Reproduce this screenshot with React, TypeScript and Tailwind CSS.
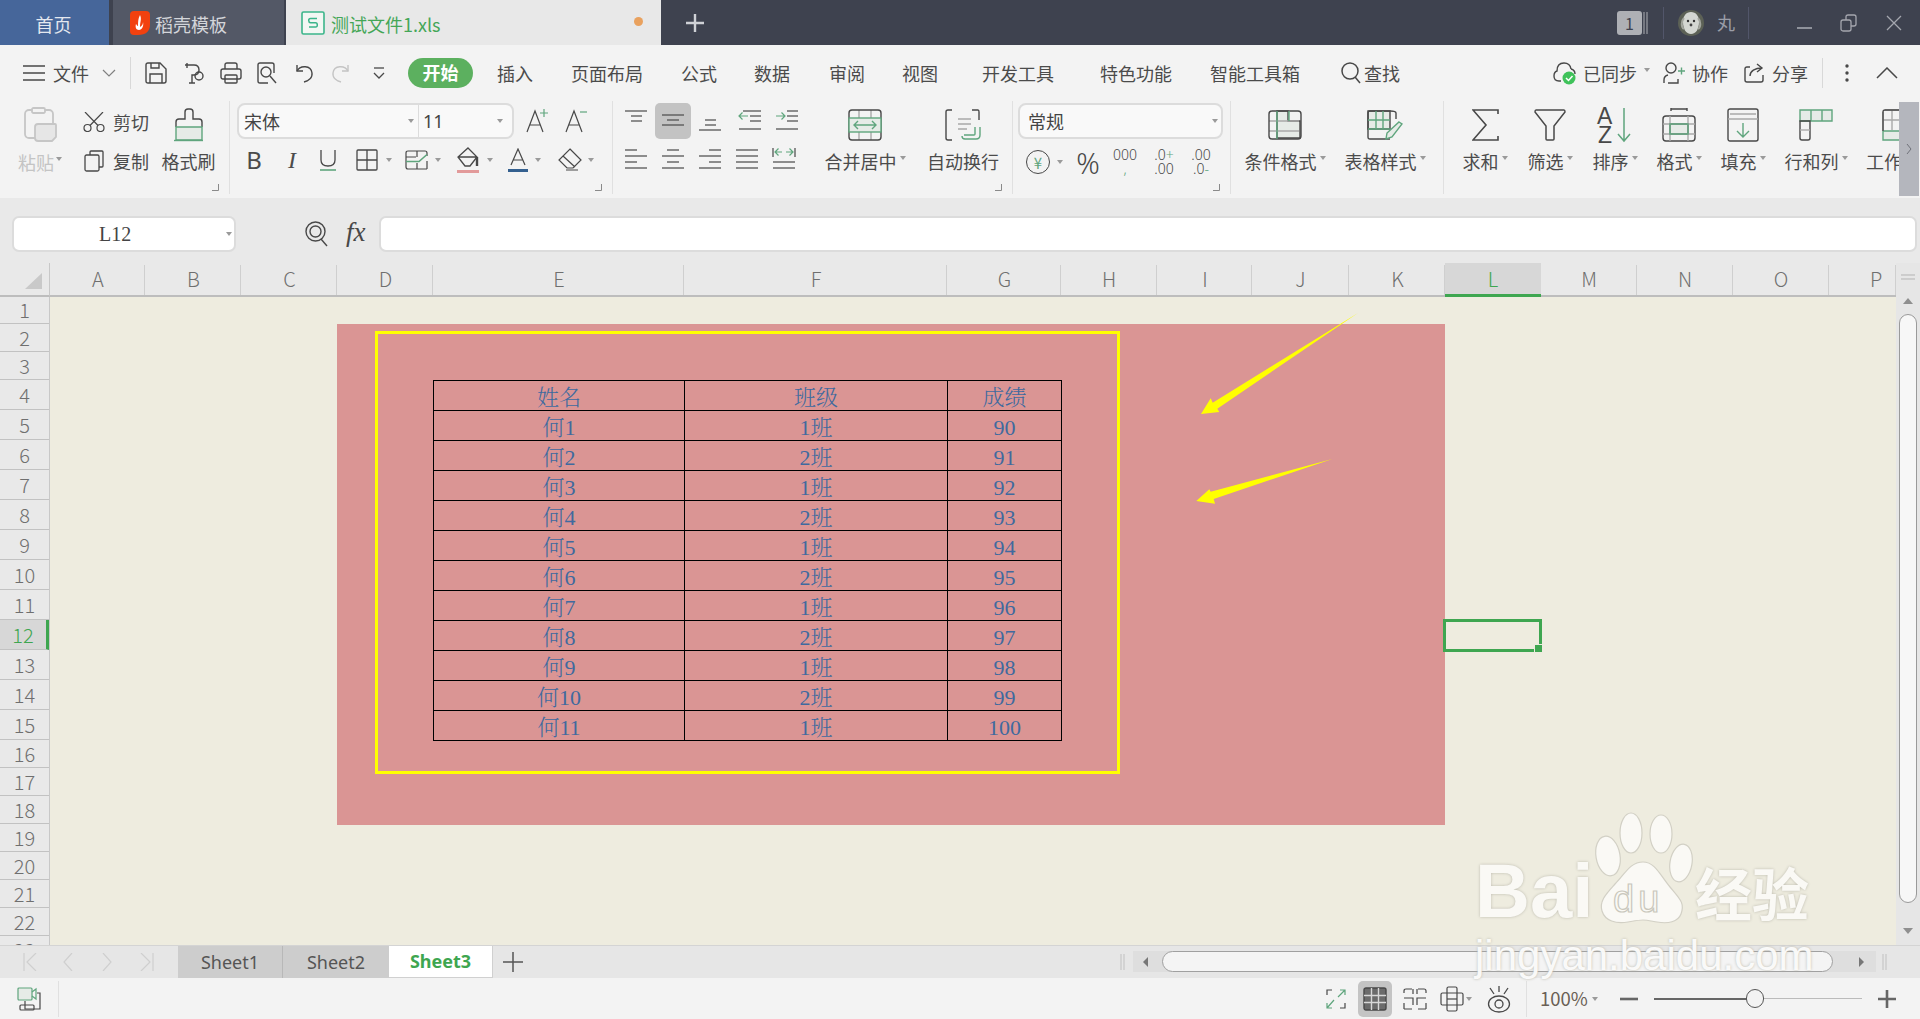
import React from 'react';

const D = '#484848';
const G = '#5fa57d';
const L = '#e6ebe7';
const M = '#a9a9a9';

function Sv({ w, h, children, sw = 1.4, stroke = D }: { w: number; h: number; children?: React.ReactNode; sw?: number; stroke?: string }) {
  return (
    <svg width={w} height={h} viewBox={`0 0 ${w} ${h}`} fill="none" stroke={stroke} strokeWidth={sw} className="block shrink-0">
      {children}
    </svg>
  );
}

function Caret({ c = '' }: { c?: string }) {
  return <span className={`block w-0 h-0 shrink-0 border-l-[3.5px] border-r-[3.5px] border-t-[4px] border-l-transparent border-r-transparent border-t-[#9a9a9a] ${c}`} />;
}

function Corner() {
  return (
    <span className="absolute right-[10px] top-[94px] block">
      <Sv w={7} h={7} sw={1} stroke="#8a8a8a"><path d="M6.5 0v6.5H0" /></Sv>
    </span>
  );
}

function Tall({ c, icon, label, caret = true }: { c: string; icon: React.ReactNode; label: string; caret?: boolean }) {
  return (
    <div className={`flex flex-col items-center pt-[18px] shrink-0 ${c}`}>
      <div className="h-[34px] flex items-center justify-center">{icon}</div>
      <div className="mt-[7px] h-[24px] flex items-center text-[18px] leading-none text-[#4b4b4b] whitespace-nowrap">
        <span>{label}</span>
        {caret && <Caret c="ml-[3px] mb-[6px]" />}
      </div>
    </div>
  );
}

function Lines({ rows, extra, h = 36 }: { rows: [number, number, number][]; extra?: React.ReactNode; h?: number }) {
  return (
    <Sv w={36} h={h} sw={1.2}>
      {rows.map((r, i) => <line key={i} x1={r[0]} x2={r[1]} y1={r[2]} y2={r[2]} />)}
      {extra}
    </Sv>
  );
}

const arrowL = (x: number, y: number, w: number) => <path stroke={G} d={`M${x + w} ${y}H${x}m3.5-3.5L${x} ${y}l3.5 3.5`} />;
const arrowR = (x: number, y: number, w: number) => <path stroke={G} d={`M${x} ${y}h${w}m-3.5-3.5 3.5 3.5-3.5 3.5`} />;

const columns = [
  { n: 'A', c: 'w-[95px]', t: 'pl-[2px]' }, { n: 'B', c: 'w-[96px]', t: 'pl-[2px]' }, { n: 'C', c: 'w-[96px]', t: 'pl-[2px]' }, { n: 'D', c: 'w-[96px]', t: 'pl-[2px]' },
  { n: 'E', c: 'w-[251px]', t: 'pl-[2px]' }, { n: 'F', c: 'w-[263px]', t: 'pl-[2px]' }, { n: 'G', c: 'w-[114px]', t: 'pl-[2px]' }, { n: 'H', c: 'w-[96px]', t: 'pl-[1px]' },
  { n: 'I', c: 'w-[95px]', t: 'pl-[2px]' }, { n: 'J', c: 'w-[97px]', t: 'pl-[1px]' }, { n: 'K', c: 'w-[96px]', t: 'pl-[2px]' }, { n: 'L', c: 'w-[96px]', t: '' },
  { n: 'M', c: 'w-[96px]', t: 'pl-[1px]' }, { n: 'N', c: 'w-[96px]', t: 'pl-[1px]' }, { n: 'O', c: 'w-[96px]', t: 'pl-[1px]' }, { n: 'P', c: 'w-[67px]', t: 'pl-[28px]' },
];

const rowHeads = Array.from({ length: 23 }, (_, i) => {
  const n = i + 1;
  const c = n === 1 ? 'h-[27px]' : n < 4 ? 'h-[28px]' : n < 16 ? 'h-[30px]' : 'h-[28px]';
  return { n, c };
});

const tableRows = Array.from({ length: 11 }, (_, i) => [`何${i + 1}`, `${i % 2 === 0 ? 1 : 2}班`, `${90 + i}`]);

const cellCls = "border border-black p-0 pt-[5px] h-[30px] text-center text-[22px] leading-none text-[#3f6a9f] font-['Liberation_Serif','Noto_Serif_CJK_SC','Noto_Sans_CJK_SC',serif] font-light";

function TitleBar() {
  return (
    <div className="flex h-[45px] bg-[#3e424f] shrink-0 items-stretch">
      <div className="w-[109px] pt-[3px] pr-[2px] bg-[#46669a] flex items-center justify-center text-[18px] text-[#e4e8ef] shrink-0">首页</div>
      <div className="ml-[4px] w-[171px] bg-[#535866] flex items-center pl-[17px] text-[18px] text-[#d3d5da] shrink-0">
        <svg width="20" height="24" viewBox="0 0 20 24" className="block shrink-0">
          <path d="M4 0h12q4 0 4 4v9q0 11-12 11H4q-4 0-4-4V4q0-4 4-4z" fill="#f2410f" />
          <path d="M10 4c2 4 0 7 0 12 2-1 3-3 3-5 1 4-1 8-4 8-3 0-4-3-3-6 1 1 1 2 2 2 0-4 0-7 2-11z" fill="#fff" />
        </svg>
        <span className="ml-[5px] pt-[3px]">稻壳模板</span>
      </div>
      <div className="ml-[2px] w-[375px] bg-[#e8e8e8] flex items-center pl-[15px] text-[18px] text-[#44a657] shrink-0">
        <svg width="24" height="24" viewBox="0 0 24 24" fill="none" className="block shrink-0">
          <rect x="1" y="1" width="22" height="22" rx="1.5" stroke="#3bb58a" strokeWidth="1.6" fill="#f2f7f3" />
          <path d="M16 7.5H9.5q-1.8 0-1.8 2t1.8 2.2h5q1.8 0 1.8 2.2t-1.8 2.1H8" stroke="#3bb58a" strokeWidth="1.5" />
        </svg>
        <span className="ml-[6px] pt-[3px] whitespace-nowrap">测试文件1.xls</span>
        <span className="ml-[193px] mb-[2px] w-[9px] h-[9px] rounded-full bg-[#e9a15e]" />
      </div>
      <div className="ml-[24px] flex items-center shrink-0">
        <Sv w={20} h={20} sw={2.4} stroke="#cfd1d6"><path d="M10 1v18M1 10h18" /></Sv>
      </div>
      <div className="ml-[912px] flex items-center shrink-0">
        <div className="w-[25px] h-[24px] bg-[#aeb0b5] rounded-[3px] text-[#3e424f] text-[16px] flex items-center justify-center">1</div>
        <Sv w={8} h={24} sw={1} stroke="#aeb0b5"><path d="M2 1v22M5 1v22" /></Sv>
        <div className="ml-[13px] w-px h-[32px] bg-[#52566a]" />
        <svg width="26" height="26" viewBox="0 0 26 26" className="block ml-[14px]">
          <circle cx="13" cy="13" r="13" fill="#5c6156" />
          <path d="M13 2c5 0 8 4 8 10 0 7-3 12-8 12s-8-5-8-12C5 6 8 2 13 2z" fill="#d4d7d2" />
          <path d="M6 8C3 11 3 17 6 19M20 8c3 3 3 9 0 11" stroke="#a3a69e" strokeWidth="2" fill="none" />
          <circle cx="10" cy="11" r="1.2" fill="#333" />
          <circle cx="16" cy="11" r="1.2" fill="#333" />
          <circle cx="13" cy="15" r="1.4" fill="#444" />
        </svg>
        <span className="ml-[13px] text-[18px] text-[#9b9ea8]">丸</span>
        <div className="ml-[13px] w-px h-[32px] bg-[#52566a]" />
        <div className="ml-[48px] mt-[10px]"><Sv w={15} h={4} sw={1.6} stroke="#a5a7af"><path d="M0 2h15" /></Sv></div>
        <div className="ml-[28px]">
          <Sv w={17} h={18} sw={1.3} stroke="#a5a7af"><rect x="1" y="6" width="10" height="11" rx="2" /><path d="M6 6V3q0-2 2-2h6q2 0 2 2v7q0 2-2 2h-3" /></Sv>
        </div>
        <div className="ml-[29px]"><Sv w={16} h={16} sw={1.3} stroke="#a5a7af"><path d="M1 1l14 14M15 1 1 15" /></Sv></div>
      </div>
    </div>
  );
}

function QA({ c, children }: { c: string; children: React.ReactNode }) {
  return <div className={`w-[34px] flex justify-center shrink-0 ${c}`}>{children}</div>;
}

function MenuText({ c, children }: { c: string; children: React.ReactNode }) {
  return <span className={`text-[18px] leading-none whitespace-nowrap shrink-0 text-[#4b4b4b] ${c}`}>{children}</span>;
}

function MenuRow() {
  return (
    <div className="flex items-center h-[45px] pt-[10px] pl-[23px] shrink-0">
      <Sv w={22} h={18} sw={1.5}><path d="M0 2h22M0 9h22M0 16h22" /></Sv>
      <MenuText c="ml-[8px] w-[36px]">文件</MenuText>
      <div className="ml-[13px]"><Sv w={14} h={8} sw={1.2} stroke="#808080"><path d="M1 1l6 6 6-6" /></Sv></div>
      <div className="ml-[14px] w-px h-[32px] bg-[#d8d8d8]" />
      <QA c="ml-[8px]">
        <Sv w={22} h={22}><path d="M3 1h12l6 6v12q0 2-2 2H3q-2 0-2-2V3q0-2 2-2z" /><path d="M5 21v-9h12v9M6 1v5h8V1" /></Sv>
      </QA>
      <QA c="ml-[4px]">
        <Sv w={22} h={22}><path d="M2 3h9q5 0 5 5t-5 5H9v8M6 21h6" /><circle cx="16" cy="14" r="4" /><path d="M4 1v5" /></Sv>
      </QA>
      <QA c="ml-[3px]">
        <Sv w={22} h={22}><path d="M5 7V3q0-2 2-2h8q2 0 2 2v4" /><rect x="1" y="7" width="20" height="10" rx="2" /><rect x="5" y="13" width="12" height="8" rx="1" /></Sv>
      </QA>
      <QA c="ml-[2px]">
        <Sv w={22} h={22}><path d="M12 21H4q-2 0-2-2V3q0-2 2-2h12q2 0 2 2v8" /><circle cx="10" cy="10" r="5" /><path d="M14 14l6 7" /></Sv>
      </QA>
      <QA c="ml-[4px]">
        <Sv w={20} h={20}><path d="M2 2v6h6" /><path d="M2 8c3-6 14-6 15 2 .6 5-4 8-8 9" /></Sv>
      </QA>
      <QA c="ml-[1px]">
        <Sv w={20} h={20} stroke="#c4c4c4"><path d="M18 2v6h-6" /><path d="M18 8c-3-6-14-6-15 2-.6 5 4 8 8 9" /></Sv>
      </QA>
      <QA c="ml-[5px]">
        <Sv w={12} h={14} sw={1.3}><path d="M1 2h10" /><path d="M1 7l5 5 5-5" /></Sv>
      </QA>
      <div className="ml-[12px] w-[65px] h-[30px] rounded-full bg-[#5cb05f] text-white text-[18px] font-bold flex items-center justify-center shrink-0">开始</div>
      <MenuText c="ml-[24px] w-[36px]">插入</MenuText>
      <MenuText c="ml-[38px] w-[72px]">页面布局</MenuText>
      <MenuText c="ml-[38px] w-[36px]">公式</MenuText>
      <MenuText c="ml-[37px] w-[36px]">数据</MenuText>
      <MenuText c="ml-[39px] w-[36px]">审阅</MenuText>
      <MenuText c="ml-[37px] w-[36px]">视图</MenuText>
      <MenuText c="ml-[44px] w-[72px]">开发工具</MenuText>
      <MenuText c="ml-[46px] w-[72px]">特色功能</MenuText>
      <MenuText c="ml-[38px] w-[90px]">智能工具箱</MenuText>
      <div className="ml-[40px]"><Sv w={22} h={24} sw={1.5}><circle cx="10" cy="10" r="8" /><path d="M15 16l5 6" /></Sv></div>
      <MenuText c="ml-[2px] w-[36px]">查找</MenuText>
      <div className="ml-[153px]">
        <svg width="24" height="24" viewBox="0 0 24 24" fill="none" className="block">
          <path d="M8 20H6q-5 0-5-5 0-4 3-5 0-8 7-8 6 0 7 6" stroke={D} strokeWidth="1.4" />
          <path d="M18 8q4 1 4 5" stroke={D} strokeWidth="1.4" />
          <circle cx="16" cy="17" r="6.5" fill="#3fc25a" />
          <path d="M13 17l2.5 2.5L19.5 15" stroke="#fff" strokeWidth="1.5" />
        </svg>
      </div>
      <MenuText c="ml-[6px] w-[54px]">已同步</MenuText>
      <Caret c="ml-[7px] mb-[5px]" />
      <div className="ml-[13px]"><Sv w={22} h={22}><circle cx="8" cy="6" r="5" /><path d="M1 21v-3q0-4 4-5M5 21h10v-4" /><path stroke={G} d="M15 9h7M18.5 5.5v7" /></Sv></div>
      <MenuText c="ml-[7px] w-[36px]">协作</MenuText>
      <div className="ml-[16px]"><Sv w={20} h={20}><path d="M6 4H3Q1 4 1 6v11q0 2 2 2h14q2 0 2-2v-5" /><path d="M6 13c0-5 5-8 12-8" /><path d="M13 1l5 4-5 4" /></Sv></div>
      <MenuText c="ml-[8px] w-[36px]">分享</MenuText>
      <div className="ml-[14px] w-px h-[30px] bg-[#d8d8d8]" />
      <div className="ml-[22px]"><Sv w={4} h={18} sw={0}><circle cx="2" cy="2" r="1.7" fill={D} /><circle cx="2" cy="9" r="1.7" fill={D} /><circle cx="2" cy="16" r="1.7" fill={D} /></Sv></div>
      <div className="ml-[27px]"><Sv w={22} h={12} sw={1.5}><path d="M1 11 11 1l10 10" /></Sv></div>
    </div>
  );
}

function NumText({ c, top, bottom }: { c: string; top: React.ReactNode; bottom: React.ReactNode }) {
  return (
    <div className={`flex flex-col items-center text-[14px] leading-[14px] font-light text-[#484848] font-['Noto_Sans',sans-serif] shrink-0 whitespace-nowrap ${c}`}>
      <span className="h-[14px]">{top}</span>
      <span className="h-[14px]">{bottom}</span>
    </div>
  );
}

function Divider() {
  return <div className="w-px h-[93px] mt-[11px] bg-[#e0e0e0] shrink-0" />;
}

function SelectBox({ c, children }: { c: string; children: React.ReactNode }) {
  return <div className={`h-[36px] border-2 border-[#dcdcdc] rounded-[8px] bg-[#f9f9f9] flex items-center shrink-0 ${c}`}>{children}</div>;
}

function Ribbon() {
  return (
    <div className="flex h-[108px] shrink-0 relative">
      {/* clipboard */}
      <div className="w-[229px] shrink-0 flex relative">
        <div className="ml-[15px] w-[50px] flex flex-col items-center pt-[17px]">
          <Sv w={33} h={36} sw={1.8} stroke="#c6c6c6">
            <rect x="1" y="3" width="28" height="28" rx="4" />
            <rect x="8" y="1" width="13" height="5" rx="1.5" fill="#f3f3f3" />
            <path d="M14 17h17q1 0 1 1v12l-4 4H14q-3 0-3-3V20q0-3 3-3z" fill="#e6e6e6" />
          </Sv>
          <div className="mt-[7px] h-[24px] flex items-center text-[18px] leading-none text-[#c4c4c4] whitespace-nowrap">粘贴<Caret c="ml-[2px] mb-[6px]" /></div>
        </div>
        <div className="ml-[18px] w-[64px] flex flex-col pt-[21px] shrink-0">
          <div className="h-[22px] flex items-center">
            <Sv w={22} h={20} sw={1.2}><circle cx="4.5" cy="16" r="3.5" /><circle cx="17.5" cy="16" r="3.5" /><path d="M7 13.5 20 0M15 13.5 2 0" /></Sv>
            <span className="ml-[8px] text-[18px] leading-none text-[#4b4b4b] whitespace-nowrap">剪切</span>
          </div>
          <div className="h-[22px] mt-[17px] flex items-center">
            <Sv w={22} h={22} sw={1.3}><path d="M7 5V2q0-1 1-1h11q1 0 1 1v14q0 1-1 1h-3" /><rect x="2" y="5" width="14" height="16" rx="1.5" /></Sv>
            <span className="ml-[8px] text-[18px] leading-none text-[#4b4b4b] whitespace-nowrap">复制</span>
          </div>
        </div>
        <Tall c="ml-[15px] w-[53px]" caret={false} label="格式刷" icon={
          <Sv w={32} h={34}>
            <path d="M3 19v-5q0-3 3-3h6V4q0-3 3-3h2q3 0 3 3v7h6q3 0 3 3v5" />
            <path d="M3 19h26v13H3z" fill={L} stroke={G} />
            <path d="M1 32.5h29" stroke={G} />
          </Sv>} />
        <Corner />
      </div>
      <Divider />
      {/* font */}
      <div className="w-[382px] shrink-0 flex flex-col pl-[7px] pt-[13px] relative">
        <div className="flex">
          <SelectBox c="w-[277px]">
            <div className="w-[179px] h-full flex items-center pl-[5px] text-[18px] text-[#444]">宋体</div>
            <Caret c="ml-[-10px]" />
            <div className="ml-[4px] w-px h-full bg-[#dcdcdc]" />
            <div className="w-[82px] pl-[4px] text-[18px] text-[#444] leading-none font-['Noto_Sans',sans-serif]">11</div>
            <Caret c="ml-[-4px]" />
          </SelectBox>
          <div className="ml-[12px] mt-[6px]">
            <Sv w={23} h={24} sw={1.2}><path d="M1 23 9 2l8 21M4 16h10" /><path stroke={G} d="M14 4h8M18 0v8" /></Sv>
          </div>
          <div className="ml-[16px] mt-[6px]">
            <Sv w={23} h={24} sw={1.2}><path d="M1 23 9 2l8 21M4 16h10" /><path stroke={G} d="M15 3h7" /></Sv>
          </div>
        </div>
        <div className="flex items-center mt-[9px] h-[24px]">
          <div className="ml-[7px] w-[20px] flex justify-center text-[24px] leading-none text-[#4b4b4b] font-['Noto_Sans',sans-serif]">B</div>
          <div className="ml-[18px] w-[20px] flex justify-center text-[24px] leading-none text-[#4b4b4b] italic font-['Liberation_Serif',serif]">I</div>
          <div className="ml-[16px] w-[20px] flex justify-center"><Sv w={16} h={22} sw={1.3}><path d="M1 1v10q0 6 7 6t7-6V1" /><path stroke={G} strokeWidth={1.6} d="M0 21h16" /></Sv></div>
          <div className="ml-[18px] w-[22px]"><Sv w={22} h={22} sw={1.3}><rect x="1" y="1" width="20" height="20" rx="1" /><path d="M11 1v20M1 11h20" /></Sv></div>
          <Caret c="ml-[8px]" />
          <div className="ml-[13px] w-[24px]"><Sv w={24} h={20} sw={1.2}><path d="M22 19H3q-2 0-2-2V3q0-2 2-2h17q2 0 2 2v3M22 11v8" /><path d="M12 1v6M1 7h10M12 13v6" /><path stroke={G} strokeWidth={1.6} d="M1 11.500h13l8-7" /></Sv></div>
          <Caret c="ml-[6px]" />
          <div className="ml-[15px] w-[24px]">
            <Sv w={24} h={26} sw={1.3}><path d="M12 1l9 9-7 9H9l-7-9zM2 10h19" /><path d="M21 10v9" strokeWidth={2.4} /><path stroke="#e29a9a" strokeWidth={3} d="M1 24.500h22" /></Sv>
          </div>
          <Caret c="ml-[7px]" />
          <div className="ml-[15px] w-[20px]">
            <Sv w={20} h={24} sw={1.2}><path d="M3 17 10 1l7 16M5.500 12h9" /><path stroke="#34608f" strokeWidth={3} d="M0 22.500h20" /></Sv>
          </div>
          <Caret c="ml-[7px]" />
          <div className="ml-[17px] w-[24px]">
            <Sv w={24} h={24} sw={1.2}><path d="M12 1l11 11-8 8H9l-8-8zM5 8l12 11M8 22h12" /></Sv>
          </div>
          <Caret c="ml-[6px]" />
        </div>
        <Corner />
      </div>
      <Divider />
      {/* alignment */}
      <div className="w-[399px] shrink-0 flex relative">
        <div className="ml-[5px] w-[187px] flex flex-col pt-[13px] shrink-0">
          <div className="flex h-[36px]">
            <Lines rows={[[7, 29, 8], [13, 24, 13], [13, 24, 18]]} />
            <div className="ml-px w-[36px] h-[36px] bg-[#c3c3c3] rounded-[5px]"><Lines rows={[[7, 29, 12], [12, 24, 17], [7, 29, 22]]} /></div>
            <div className="ml-px"><Lines rows={[[13, 24, 17], [13, 24, 22], [7, 29, 27]]} /></div>
            <div className="ml-[4px]"><Lines rows={[[11, 29, 8], [18, 29, 13], [18, 29, 18], [7, 29, 26]]} extra={arrowL(7, 13, 9)} /></div>
            <div className="ml-px"><Lines rows={[[18, 29, 8], [18, 29, 13], [18, 29, 18], [7, 29, 26]]} extra={arrowR(7, 13, 9)} /></div>
          </div>
          <div className="flex mt-[8px] h-[24px]">
            <Lines h={24} rows={[[7, 19, 3], [7, 29, 9], [7, 19, 15], [7, 29, 21]]} />
            <div className="ml-px"><Lines h={24} rows={[[12, 24, 3], [7, 29, 9], [12, 24, 15], [7, 29, 21]]} /></div>
            <div className="ml-px"><Lines h={24} rows={[[17, 29, 3], [7, 29, 9], [17, 29, 15], [7, 29, 21]]} /></div>
            <div className="ml-px"><Lines h={24} rows={[[7, 29, 3], [7, 29, 9], [7, 29, 15], [7, 29, 21]]} /></div>
            <div className="ml-px">
              <Lines h={24} rows={[[7, 29, 15], [7, 29, 21]]} extra={<><path d="M7 1v9M29 1v9" />{arrowL(9, 5, 7)}{arrowR(20, 5, 7)}</>} />
            </div>
          </div>
        </div>
        <Tall c="ml-[15px] w-[90px]" label="合并居中" icon={
          <Sv w={34} h={32} sw={1.4}>
            <path d="M11 1v8M23 1v8M11 23v8M23 23v8" stroke={M} />
            <rect x="1" y="1" width="32" height="30" rx="3" />
            <rect x="1" y="9" width="32" height="14" fill={L} stroke={G} />
            <path d="M6 16h22M10 12l-4 4 4 4M24 12l4 4-4 4" stroke={G} />
          </Sv>} />
        <Tall c="ml-[15px] w-[76px]" caret={false} label="自动换行" icon={
          <Sv w={38} h={32}>
            <path d="M8 1H4Q2 1 2 3v26q0 2 2 2h4M28 1h6q1 0 1 2v8" />
            <path d="M14 10h13M14 15h13M14 20h9" stroke={M} />
            <path d="M36 18v8q0 4-4 4H21q-3 0-3-3M31 18v7q0 1-1 1H20" stroke={G} />
          </Sv>} />
        <Corner />
      </div>
      <Divider />
      {/* number */}
      <div className="w-[217px] shrink-0 flex flex-col pl-[5px] pt-[13px] relative">
        <SelectBox c="w-[205px] pl-[8px] text-[18px] text-[#444]">
          <span>常规</span>
          <Caret c="ml-[148px]" />
        </SelectBox>
        <div className="flex items-center mt-[9px] h-[28px]">
          <div className="ml-[8px] w-[24px] h-[24px] rounded-full border-[1.5px] border-[#484848] flex items-center justify-center text-[15px] leading-none text-[#5fa57d]">¥</div>
          <Caret c="ml-[7px]" />
          <div className="ml-[13px] w-[24px] text-center text-[29px] leading-none font-light text-[#484848] font-['Noto_Sans',sans-serif] shrink-0">%</div>
          <NumText c="ml-[13px] w-[24px]" top="000" bottom={<span className="text-[#5fa57d]">,</span>} />
          <NumText c="ml-[13px] w-[28px]" top={<>.0<span className="text-[#5fa57d]">+</span></>} bottom=".00" />
          <NumText c="ml-[9px] w-[28px]" top=".00" bottom={<>.0<span className="text-[#5fa57d]">-</span></>} />
        </div>
        <Corner />
      </div>
      <Divider />
      {/* styles */}
      <div className="w-[212px] shrink-0 flex">
        <Tall c="ml-[9px] w-[90px]" label="条件格式" icon={
          <Sv w={34} h={30}>
            <path d="M9 1h11v10h12v17H9z" fill={L} />
            <path d="M1 11h30M1 21h30" stroke={M} />
            <rect x="1" y="1" width="32" height="28" rx="3" />
            <path d="M9 1v28M21 1v10" stroke={G} />
          </Sv>} />
        <Tall c="ml-[10px] w-[90px]" label="表格样式" icon={
          <Sv w={36} h={30}>
            <path d="M1 1h22v18H1z" fill={L} />
            <path d="M23 29H3q-2 0-2-2V3q0-2 2-2h20q6 0 6 2v6" />
            <path d="M1 10h22M1 19h22M9 1v18M16 1v18" stroke={G} />
            <path d="M32 12l3 2-10 13-6 2 1-6z" stroke={G} fill={L} />
          </Sv>} />
      </div>
      <Divider />
      {/* cells */}
      <div className="flex shrink-0 w-[475px]">
        <Tall c="ml-[11px] w-[60px]" label="求和" icon={<Sv w={27} h={32} sw={1.6}><path d="M26 5V1H1l13 15L1 31h25v-4" /></Sv>} />
        <Tall c="ml-[5px] w-[60px]" label="筛选" icon={<Sv w={32} h={32} sw={1.5}><path d="M2 1h28q1 0 1 2L20 17v13q0 1-1 1h-6q-1 0-1-1V17L1 3q0-2 1-2z" /></Sv>} />
        <Tall c="ml-[5px] w-[60px]" label="排序" icon={
          <svg width="36" height="36" viewBox="0 0 36 36" fill="none" className="block overflow-visible">
            <text x="0" y="17" fontSize="23" fill={D} fontFamily="'Liberation Sans',sans-serif">A</text>
            <text x="1" y="36" fontSize="23" fill={D} fontFamily="'Liberation Sans',sans-serif">Z</text>
            <path d="M27 1v33M21 27l6 7 6-7" stroke={G} strokeWidth="1.5" />
          </svg>} />
        <Tall c="ml-[4px] w-[60px]" label="格式" icon={
          <Sv w={34} h={34}>
            <path d="M9 1h16M9 0v3M25 0v3" />
            <path d="M8 16h18v10H8z" fill={L} />
            <rect x="1" y="8" width="32" height="25" rx="3" />
            <path d="M1 16h32M1 26h32M8 8v25M26 8v25" stroke={M} />
            <path d="M8 16h18v10H8z" stroke={G} />
          </Sv>} />
        <Tall c="ml-[4px] w-[60px]" label="填充" icon={
          <Sv w={32} h={34}>
            <rect x="1" y="1" width="30" height="32" rx="2" />
            <path d="M1 11h30M3 6h26" stroke={M} />
            <path d="M16 15v14M10 23l6 6 6-6" stroke={G} />
          </Sv>} />
        <Tall c="ml-[8px] w-[70px]" label="行和列" icon={
          <Sv w={34} h={32}>
            <path d="M1 1h32v11H1z" fill={L} stroke={G} />
            <path d="M12 1v11M23 1v11" stroke={G} />
            <path d="M1 12v17q0 2 2 2h6q2 0 2-2V12z" />
            <path d="M1 21h10" stroke={M} />
          </Sv>} />
        <div className="ml-[15px] w-[33px] pt-[18px] shrink-0 overflow-hidden">
          <div className="h-[34px] flex items-center pl-[16px]">
            <Sv w={20} h={32}>
              <path d="M1 22h18v9H1z" fill={L} stroke={G} />
              <path d="M3 1h15M1 3v18M1 11h18M10 1v20" stroke={M} />
              <path d="M1 22V3q0-2 2-2h16" />
            </Sv>
          </div>
          <div className="mt-[7px] h-[24px] flex items-center text-[18px] leading-none text-[#4b4b4b] whitespace-nowrap">工作</div>
        </div>
        <div className="w-[20px] h-[94px] mt-[12px] bg-[#b4b6bd] flex items-center justify-center shrink-0">
          <Sv w={6} h={12} sw={1} stroke="#70727a"><path d="M1 1l4 5-4 5" /></Sv>
        </div>
      </div>
    </div>
  );
}

function FormulaBar() {
  return (
    <div className="h-[65px] bg-[#e9e9e9] flex pt-[18px] shrink-0">
      <div className="ml-[12px] w-[224px] h-[36px] bg-white border-2 border-[#dcdcdc] rounded-[7px] flex items-center shrink-0">
        <span className="ml-[85px] w-[40px] text-[20px] leading-none text-[#444] font-['Liberation_Serif',serif]">L12</span>
        <Caret c="ml-[87px]" />
      </div>
      <div className="ml-[69px] mt-[5px]">
        <Sv w={24} h={26} sw={1.4}><circle cx="10.500" cy="10.500" r="9.500" /><circle cx="10.500" cy="10.500" r="5.500" /><path d="M16 18l6 7" /></Sv>
      </div>
      <span className="ml-[17px] mt-[3px] w-[26px] text-[27px] leading-none italic text-[#484848] font-['Liberation_Serif',serif]">fx</span>
      <div className="ml-[7px] w-[1538px] h-[36px] bg-white border-2 border-[#dcdcdc] rounded-[7px] shrink-0" />
    </div>
  );
}

function ColumnHeader() {
  return (
    <div className="h-[34px] bg-[#e9e9e9] flex shrink-0 relative">
      <div className="w-[50px] h-[34px] border-b-2 border-[#bdbdbd] border-r border-r-[#c8c8c8] flex items-end justify-end pr-[7px] pb-[6px] shrink-0">
        <svg width="17" height="16" className="block shrink-0"><path d="M17 0v16H0z" fill="#c9c9c9" /></svg>
      </div>
      {columns.map((col) =>
        col.n === 'L' ? (
          <div key={col.n} className={`${col.c} h-[34px] bg-[#d7d7d7] border-b-[3px] border-[#3ea650] flex items-center justify-center text-[20px] font-light text-[#3ea650] shrink-0`}>{col.n}</div>
        ) : (
          <div key={col.n} className={`${col.c} h-[34px] border-b-2 border-[#bdbdbd] flex items-center justify-center shrink-0`}>
            <span className={`flex-1 text-center text-[20px] font-light text-[#6f6f6f] ${col.t}`}>{col.n}</span>
            <span className="w-px h-[30px] mt-[2px] bg-[#cfcfcf]" />
          </div>
        )
      )}
      <div className="w-[24px] bg-[#e6e6e6] flex flex-col items-center pt-[11px] shrink-0">
        <Sv w={16} h={6} sw={1} stroke="#b3b3b3"><path d="M1 1h14M1 5h14" /></Sv>
      </div>
    </div>
  );
}

function RowHeader() {
  return (
    <div className="w-[50px] h-[648px] overflow-hidden bg-[#e9e9e9] border-r border-[#c8c8c8] shrink-0">
      {rowHeads.map((r) => (
        <div key={r.n} className={`${r.c} flex items-center justify-center border-b border-[#c2c2c2] text-[20px] leading-none font-light ${r.n === 12 ? 'bg-[#d7d7d7] border-r-[3px] border-r-[#3ea650] text-[#3ea650]' : 'text-[#6f6f6f]'}`}>
          {r.n}
        </div>
      ))}
    </div>
  );
}

function Sheet() {
  return (
    <div className="w-[1846px] h-[648px] bg-[#eeecdf] relative grid grid-cols-[95px_96px_96px_96px_251px_263px_114px_96px_95px_97px_96px_96px_96px_96px_96px_67px] grid-rows-[27px_28px_28px_repeat(12,30px)_repeat(7,28px)_1fr] shrink-0">
      <div className="col-start-4 col-end-12 row-start-2 row-end-19 mb-[-1px] bg-[#da9594]" />
      <div className="col-start-4 col-end-12 row-start-2 row-end-19 ml-[38px] mt-[7px] w-[745px] h-[443px] border-[3px] border-[#ffff00]" />
      <div className="col-start-5 col-end-8 row-start-4 row-end-16 z-10">
        <table className="border-collapse table-fixed w-[628px]">
          <colgroup>
            <col className="w-[251px]" />
            <col className="w-[263px]" />
            <col className="w-[114px]" />
          </colgroup>
          <tbody>
            <tr><td className={cellCls}>姓名</td><td className={cellCls}>班级</td><td className={cellCls}>成绩</td></tr>
            {tableRows.map((r) => (
              <tr key={r[0]}>{r.map((v, i) => <td key={i} className={cellCls}>{v}</td>)}</tr>
            ))}
          </tbody>
        </table>
      </div>
      <div className="col-start-12 row-start-12 -ml-[2px] -mr-[1px] -mt-[1px] -mb-[2px] border-[3px] border-[#3ea650] relative z-10">
        <span className="absolute right-[-4px] bottom-[-4px] w-[7px] h-[7px] bg-[#3ea650] border border-[#eeecdf] box-content" />
      </div>
      <svg width="400" height="230" viewBox="1150 297 400 230" className="absolute left-[1100px] top-0 overflow-visible z-10">
        <path d="M1358 313 1217.300 408.700 1219.300 412 1201 414 1210.700 398.300 1212.700 402.700Z" fill="#ffff00" />
        <path d="M1332.300 459 1213.700 499 1215 503.700 1196.300 501 1209.300 489.300 1210.700 491.700Z" fill="#ffff00" />
      </svg>
    </div>
  );
}

function VScroll() {
  return (
    <div className="w-[24px] h-[648px] bg-[#e6e6e6] flex flex-col items-center pt-[2px] shrink-0">
      <span className="block w-0 h-0 border-l-[5px] border-r-[5px] border-b-[6px] border-l-transparent border-r-transparent border-b-[#8f8f8f] mt-[-1px]" />
      <div className="mt-[10px] w-[18px] h-[589px] bg-[#f7f7f7] border border-[#9a9a9a] rounded-full" />
      <span className="mt-[25px] block w-0 h-0 border-l-[5px] border-r-[5px] border-t-[6px] border-l-transparent border-r-transparent border-t-[#8f8f8f]" />
    </div>
  );
}

function TabBar() {
  return (
    <div className="h-[33px] bg-[#e6e6e6] border-t border-[#d4d4d4] flex shrink-0">
      <div className="w-[178px] flex items-center pl-[23px] shrink-0">
        <Sv w={14} h={18} sw={1.2} stroke="#cfcfcf"><path d="M1 0v18M13 0 4 9l9 9" /></Sv>
        <div className="ml-[26px]"><Sv w={10} h={18} sw={1.2} stroke="#cfcfcf"><path d="M9 0 1 9l8 9" /></Sv></div>
        <div className="ml-[29px]"><Sv w={10} h={18} sw={1.2} stroke="#cfcfcf"><path d="M1 0l8 9-8 9" /></Sv></div>
        <div className="ml-[28px]"><Sv w={14} h={18} sw={1.2} stroke="#cfcfcf"><path d="M13 0v18M1 0l9 9-9 9" /></Sv></div>
      </div>
      <div className="w-[105px] bg-[#cdcdcd] border-r border-[#b8b8b8] flex items-center justify-center text-[18px] text-[#555] font-['Noto_Sans',sans-serif] shrink-0">Sheet1</div>
      <div className="w-[106px] bg-[#cdcdcd] flex items-center justify-center text-[18px] text-[#555] font-['Noto_Sans',sans-serif] shrink-0">Sheet2</div>
      <div className="w-[104px] bg-white border-r border-b border-[#d0d0d0] flex items-center justify-center text-[18px] font-bold text-[#3ea650] font-['Noto_Sans',sans-serif] shrink-0">Sheet3</div>
      <div className="ml-[10px] flex items-center">
        <Sv w={20} h={20} sw={1.5} stroke="#555"><path d="M10 0v20M0 10h20" /></Sv>
      </div>
      <div className="ml-[597px] flex items-center shrink-0">
        <Sv w={6} h={16} sw={1} stroke="#c0c0c0"><path d="M1 0v16M4 0v16" /></Sv>
      </div>
      <div className="ml-[7px] mt-[5px] w-[743px] h-[21px] bg-[#dedede] flex items-center shrink-0">
        <span className="ml-[10px] block w-0 h-0 border-t-[5px] border-b-[5px] border-r-[5px] border-t-transparent border-b-transparent border-r-[#777]" />
        <div className="ml-[14px] w-[671px] h-[21px] bg-[#f4f4f4] border border-[#a0a0a0] rounded-full" />
        <span className="ml-[26px] block w-0 h-0 border-t-[5px] border-b-[5px] border-l-[5px] border-t-transparent border-b-transparent border-l-[#777]" />
      </div>
      <div className="ml-[6px] flex items-center shrink-0">
        <Sv w={6} h={16} sw={1} stroke="#c0c0c0"><path d="M1 0v16M4 0v16" /></Sv>
      </div>
    </div>
  );
}

function StatusBar() {
  return (
    <div className="h-[41px] bg-[#f3f3f3] flex items-center shrink-0">
      <div className="ml-[17px]">
        <Sv w={24} h={24} sw={1.2}>
          <path d="M20 6h3v16H8v-8" />
          <rect x="1" y="1" width="14" height="12" rx="1" fill={L} stroke={G} />
          <path d="M15 5l4-3v10l-4-3" stroke={G} />
          <rect x="3" y="18" width="14" height="5" rx="1" />
        </Sv>
      </div>
      <div className="ml-[17px] w-px h-[36px] bg-[#e0e0e0]" />
      <div className="ml-[1267px]">
        <Sv w={20} h={20} sw={1.2}>
          <path d="M6 1H1v5M14 19h5v-5" />
          <path stroke={G} d="M19 6V1h-5M19 1l-7 7M1 14v5h5M1 19l7-8" />
        </Sv>
      </div>
      <div className="ml-[12px] w-[34px] h-[36px] bg-[#c4c4c4] rounded-[5px] flex items-center justify-center">
        <Sv w={24} h={24} sw={1.4}><rect x="1" y="1" width="22" height="22" rx="2" fill="#6b6b6b" /><path d="M8.500 1v22M15.500 1v22M1 8.500h22M1 15.500h22" stroke="#d8d8d8" /></Sv>
      </div>
      <div className="ml-[11px]">
        <Sv w={24} h={22} sw={1.2}><path d="M9 1H3Q1 1 1 3v2M15 1h6q2 0 2 2v2M1 21h8M1 10h9v7M23 10h-9v7M23 21h-8M1 15v6M23 15v6M10 1v5M14 1v5" /></Sv>
      </div>
      <div className="ml-[13px]">
        <Sv w={24} h={26} sw={1.2}><rect x="7" y="1" width="10" height="24" rx="1.500" /><rect x="1" y="7" width="22" height="12" rx="1.500" /><path d="M7 13h10" /></Sv>
      </div>
      <Caret c="ml-[2px]" />
      <div className="ml-[15px]">
        <Sv w={24} h={28} sw={1.3}><ellipse cx="12" cy="19" rx="10.500" ry="8" /><circle cx="12" cy="19" r="4" /><path d="M12 1v6M3 3l4 6M21 3l-4 6" /></Sv>
      </div>
      <div className="ml-[15px] w-px h-[36px] bg-[#e0e0e0]" />
      <span className="ml-[13px] w-[47px] text-[18.500px] leading-none text-[#6a5f55] whitespace-nowrap">100%</span>
      <Caret c="ml-[5px]" />
      <div className="ml-[22px]"><Sv w={18} h={4} sw={2.6} stroke="#666"><path d="M0 2h18" /></Sv></div>
      <div className="ml-[16px] w-[208px] h-[1px] bg-[#bbb] relative">
        <div className="w-[100px] h-[1.500px] bg-[#666]" />
        <span className="absolute left-[92px] top-[-9px] w-[18px] h-[19px] rounded-full bg-[#f3f3f3] border-[1.500px] border-[#555]" />
      </div>
      <div className="ml-[16px]"><Sv w={18} h={18} sw={2.6} stroke="#666"><path d="M9 0v18M0 9h18" /></Sv></div>
    </div>
  );
}

function Watermark() {
  return (
    <div className="absolute left-[1475px] top-[812px] w-[350px] h-[165px] z-20 pointer-events-none">
      <div className="flex items-end h-[113px]">
        <span className="w-[116px] text-[76px] leading-[68px] font-bold text-[#faf9f5] font-['Liberation_Sans',sans-serif] [text-shadow:0_0_3px_#b9b7ab] whitespace-nowrap">Bai</span>
        <svg width="100" height="113" viewBox="0 0 100 113" className="block shrink-0 ml-[2px]">
          <g fill="#faf9f5" stroke="#d2d0c5" strokeWidth="1.2">
            <ellipse cx="38" cy="21" rx="11" ry="20" />
            <ellipse cx="68" cy="22" rx="11" ry="19" />
            <ellipse cx="15" cy="44" rx="12" ry="20" transform="rotate(-10 15 44)" />
            <ellipse cx="88" cy="51" rx="11" ry="19" transform="rotate(10 88 51)" />
            <path d="M50 50c12 0 17 13 27 25 10 12 15 16 11 27-3 8-13 10-24 8-6-1-10-2-14-2s-9 1-15 2c-12 2-23-1-26-11-3-10 4-17 13-27C32 62 37 50 50 50z" />
          </g>
          <text x="20" y="100" fontSize="38" letterSpacing="4" fill="#faf9f5" stroke="#c9c7bc" strokeWidth="1.2" fontFamily="'Liberation Sans',sans-serif">du</text>
        </svg>
        <span className="ml-[2px] text-[57px] leading-[68px] font-bold text-[#faf9f5] [text-shadow:0_0_3px_#b9b7ab] whitespace-nowrap">经验</span>
      </div>
      <div className="mt-[8px] text-[42px] leading-[46px] text-white/90 font-['Liberation_Sans',sans-serif] [text-shadow:0_0_3px_#b9b7ab] whitespace-nowrap">jingyan.baidu.com</div>
    </div>
  );
}

export default function App() {
  return (
    <div className="w-[1920px] h-[1019px] overflow-hidden relative flex flex-col bg-[#f3f3f3] font-['Noto_Sans_CJK_SC','Noto_Sans',sans-serif]">
      <TitleBar />
      <MenuRow />
      <Ribbon />
      <div className="h-[0px] shadow-[0_1px_4px_rgba(0,0,0,0.25)] relative z-10" />
      <FormulaBar />
      <ColumnHeader />
      <div className="flex shrink-0">
        <RowHeader />
        <Sheet />
        <VScroll />
      </div>
      <TabBar />
      <StatusBar />
      <Watermark />
    </div>
  );
}
